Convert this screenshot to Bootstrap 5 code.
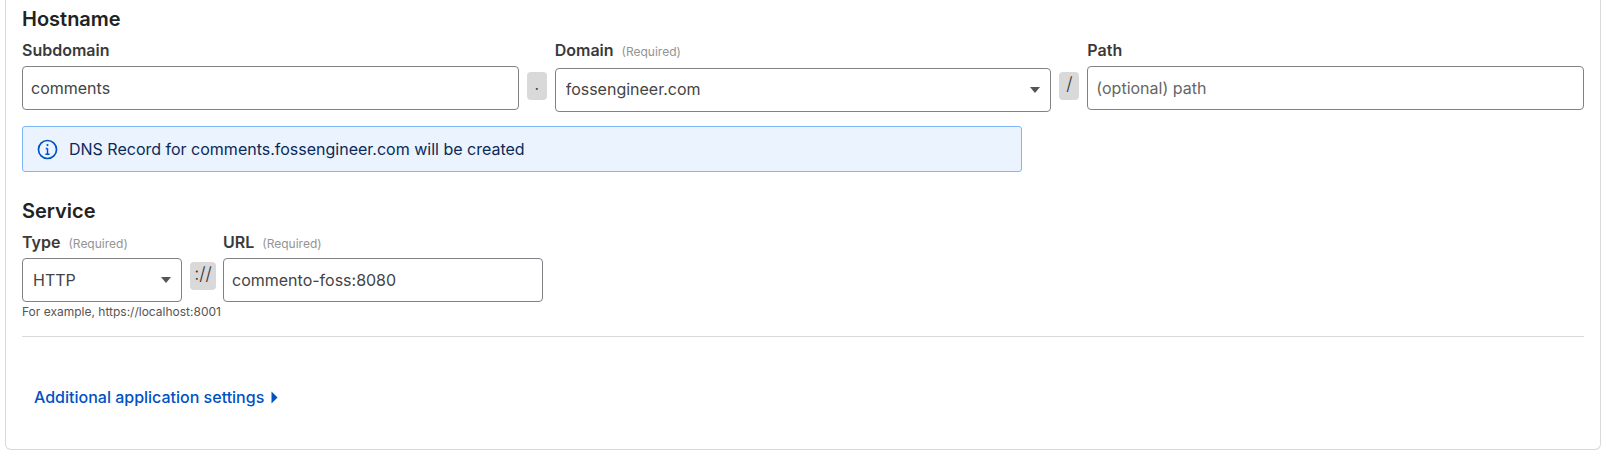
<!DOCTYPE html>
<html lang="en">
<head>
<meta charset="utf-8">
<title>Hostname and service</title>
<link href="https://cdn.jsdelivr.net/npm/bootstrap@5.3.0/dist/css/bootstrap.min.css" rel="stylesheet">
<style>
html, body { height: 100%; overflow: hidden; }
body { background: #fff; color: #222; font-family: Inter, "Liberation Sans", sans-serif; font-size: 16px; }
.route-card { margin: 0 6.5px 9px 5px; height: 450px; border: 1px solid #d9d9d9; border-top: 0; border-radius: 0 0 6px 6px; padding: 7px 15.5px 0 16px; }
.sec-head { font-size: 20px; font-weight: 600; line-height: 24px; color: #222; margin: 0 0 9px; }
.fld-label { font-size: 16px; font-weight: 600; line-height: 20px; color: #3a3a3a; margin-bottom: 6px; display: block; white-space: nowrap; }
.svc-row .fld-label { margin-bottom: 4px; }
.req-note { font-size: 12px; font-weight: 400; color: #949494; margin-left: 4px; }
.fld-input, .fld-select { height: 44px; border: 1px solid #808285; border-radius: 4px; color: #444; font-size: 16px; padding: 0 8px; box-shadow: none; }
.fld-input::placeholder { color: #666; opacity: 1; }
.fld-select { padding: 0 28px 1px 10px; background-size: 10px 6px; background-position: right 10px center; background-image: url("data:image/svg+xml,%3csvg xmlns='http://www.w3.org/2000/svg' viewBox='0 0 10 6'%3e%3cpath fill='%23555' d='M0 0h10L5 6z'/%3e%3c/svg%3e"); }
.host-row .fld-select { padding-bottom: 3px; }
.host-col { flex: 1 1 0; min-width: 0; }
.sep-chip { flex: none; margin: 4px 8px 0; height: 28px; min-width: 20px; padding: 0 3px 4px; background: #d9d9d9; border-radius: 4px; display: flex; align-items: center; justify-content: center; font-size: 18px; font-weight: 300; line-height: 1; color: #333; }
.sep-gap { margin-right: 7px; min-width: 26px; }
.sep-slot { flex: none; align-self: flex-end; height: 44px; }
.dns-alert { width: 1000px; height: 46px; margin: 14px 0 0; padding: 0 14px; background: #ebf3fe; border: 1px solid #7db5f7; border-radius: 3px; color: #0a2a5a; font-size: 16px; }
.dns-alert svg { width: 21px; height: 21px; flex: none; margin-right: 11px; }
.svc-block { margin-top: 27px; }
.type-col { width: 160px; flex: none; }
.url-col { width: 320px; flex: none; }
.hint-line { font-size: 12px; line-height: 16px; color: #555; margin-top: 2px; white-space: nowrap; }
.divider-line { margin: 16px 0 0; border: 0; border-top: 1px solid #d9d9d9; opacity: 1; }
.more-link { display: inline-flex; align-items: center; margin: 49px 0 0 12px; color: #0051c3; text-decoration: none; font-size: 16px; font-weight: 500; line-height: 22px; }
.more-link svg { width: 7px; height: 13px; margin-left: 7px; }
</style>
</head>
<body>
<div class="route-card">
  <h2 class="sec-head">Hostname</h2>
  <div class="d-flex host-row">
    <div class="host-col">
      <label class="fld-label" for="sub">Subdomain</label>
      <input id="sub" class="form-control fld-input" value="comments">
    </div>
    <div class="sep-slot"><div class="sep-chip">.</div></div>
    <div class="host-col">
      <label class="fld-label" for="dom">Domain <span class="req-note">(Required)</span></label>
      <select id="dom" class="form-select fld-select"><option>fossengineer.com</option></select>
    </div>
    <div class="sep-slot"><div class="sep-chip">/</div></div>
    <div class="host-col">
      <label class="fld-label" for="pth">Path</label>
      <input id="pth" class="form-control fld-input" placeholder="(optional) path">
    </div>
  </div>
  <div class="alert dns-alert d-flex align-items-center" role="alert">
    <svg viewBox="0 0 20 20" fill="none" stroke="#0051c3" stroke-width="1.6"><circle cx="10" cy="10" r="8.6"/><path d="M10 9v5.500M8 14.500h4M8.300 9H10" stroke-width="1.4"/><circle cx="10" cy="5.800" r="1" fill="#0051c3" stroke="none"/></svg>
    <span>DNS Record for comments.fossengineer.com will be created</span>
  </div>
  <div class="svc-block">
    <h2 class="sec-head">Service</h2>
    <div class="d-flex svc-row">
      <div class="type-col">
        <label class="fld-label" for="typ">Type <span class="req-note">(Required)</span></label>
        <select id="typ" class="form-select fld-select"><option>HTTP</option></select>
      </div>
      <div class="sep-slot"><div class="sep-chip sep-gap">://</div></div>
      <div class="url-col">
        <label class="fld-label" for="url">URL <span class="req-note">(Required)</span></label>
        <input id="url" class="form-control fld-input" value="commento-foss:8080">
      </div>
    </div>
    <div class="hint-line">For example, https://localhost:8001</div>
  </div>
  <hr class="divider-line">
  <a class="more-link" href="#">Additional application settings
    <svg viewBox="0 0 7 13"><path fill="#0051c3" d="M0.500 0.500L6.500 6.500L0.500 12.500z"/></svg>
  </a>
</div>
<script src="https://cdn.jsdelivr.net/npm/bootstrap@5.3.0/dist/js/bootstrap.bundle.min.js"></script>
</body>
</html>
